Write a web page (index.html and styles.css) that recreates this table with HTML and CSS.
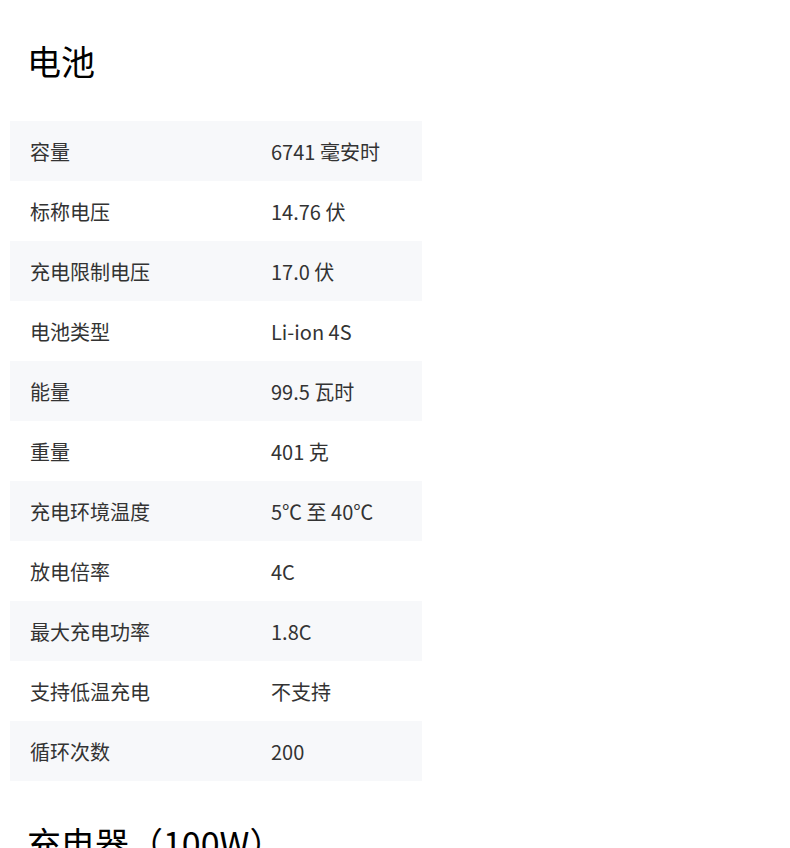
FILE: index.html
```html
<!DOCTYPE html>
<html lang="zh-CN">
<head>
<meta charset="utf-8">
<link rel="stylesheet" href="styles.css">
</head>
<body>
<div class="page">
  <h2 class="title">电池</h2>
  <table class="spec">
    <tr><td class="k">容量</td><td class="v">6741 毫安时</td></tr>
    <tr><td class="k">标称电压</td><td class="v">14.76 伏</td></tr>
    <tr><td class="k">充电限制电压</td><td class="v">17.0 伏</td></tr>
    <tr><td class="k">电池类型</td><td class="v">Li-ion 4S</td></tr>
    <tr><td class="k">能量</td><td class="v">99.5 瓦时</td></tr>
    <tr><td class="k">重量</td><td class="v">401 克</td></tr>
    <tr><td class="k">充电环境温度</td><td class="v">5℃ 至 40℃</td></tr>
    <tr><td class="k">放电倍率</td><td class="v">4C</td></tr>
    <tr><td class="k">最大充电功率</td><td class="v">1.8C</td></tr>
    <tr><td class="k">支持低温充电</td><td class="v">不支持</td></tr>
    <tr><td class="k">循环次数</td><td class="v">200</td></tr>
  </table>
  <h2 class="title next">充电器（100W）</h2>
</div>
</body>
</html>
```
FILE: styles.css
```css
html, body {
  margin: 0;
  padding: 0;
  background: #fff;
}
.page {
  padding: 0 10px;
  font-family: "Noto Sans CJK SC", "Noto Sans", sans-serif;
}
.title {
  margin: 0;
  padding: 38px 0 0 17px;
  font-size: 34px;
  font-weight: 400;
  line-height: 46px;
  color: #000;
}
.spec {
  margin-top: 37px;
  width: 412px;
  border-collapse: collapse;
}
.spec tr {
  height: 60px;
}
.spec tr:nth-child(odd) {
  background: #f7f8fa;
}
.spec td {
  padding: 0 0 0 20px;
  font-size: 20px;
  color: #333;
  vertical-align: middle;
}
.spec td.k {
  width: 221px;
}
.title.next {
  padding-top: 39px;
}
```
